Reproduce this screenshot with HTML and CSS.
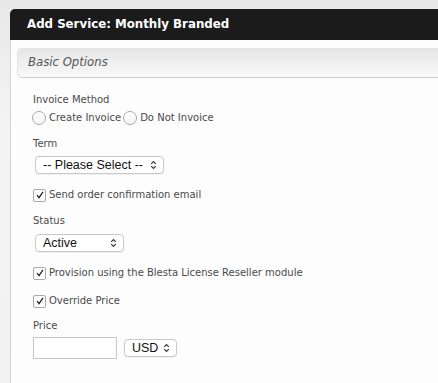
FILE: index.html
```html
<!DOCTYPE html>
<html lang="en">
  <head>
    <meta charset="UTF-8" />
    <meta name="viewport" content="width=device-width, initial-scale=1.0" />
    <title>Add Service</title>
    <link rel="stylesheet" href="styles.css">
  </head>
  <body>
    <div class="panel">
      <div class="panel-head">Add Service: Monthly Branded</div>
      <div class="panel-body">
        <div class="section-bar">Basic Options</div>

        <div class="form">
          <div class="label lbl-first">Invoice Method</div>
          <div class="radio-row">
            <span class="radio"></span><span class="opt">Create Invoice</span>
            <span class="radio"></span><span class="opt">Do Not Invoice</span>
          </div>

          <div class="label lbl-term">Term</div>
          <div class="select sel-term">
            <span>-- Please Select --</span>
            <svg class="chev" width="7" height="10" viewBox="0 0 7 10"><path d="M1.2 3.8 L3.5 1.5 L5.8 3.8 M1.2 6.2 L3.5 8.5 L5.8 6.2" fill="none" stroke="#333" stroke-width="1.2"/></svg>
          </div>

          <div class="check-row row-email">
            <span class="check"><svg width="10" height="10" viewBox="0 0 10 10"><path d="M2 5.2 L4 7.6 L8 1.8" fill="none" stroke="#222" stroke-width="1.3"/></svg></span>
            <span class="opt">Send order confirmation email</span>
          </div>

          <div class="label lbl-status">Status</div>
          <div class="select sel-status">
            <span>Active</span>
            <svg class="chev" width="7" height="10" viewBox="0 0 7 10"><path d="M1.2 3.8 L3.5 1.5 L5.8 3.8 M1.2 6.2 L3.5 8.5 L5.8 6.2" fill="none" stroke="#333" stroke-width="1.2"/></svg>
          </div>

          <div class="check-row row-provision">
            <span class="check"><svg width="10" height="10" viewBox="0 0 10 10"><path d="M2 5.2 L4 7.6 L8 1.8" fill="none" stroke="#222" stroke-width="1.3"/></svg></span>
            <span class="opt">Provision using the Blesta License Reseller module</span>
          </div>

          <div class="check-row row-override">
            <span class="check"><svg width="10" height="10" viewBox="0 0 10 10"><path d="M2 5.2 L4 7.6 L8 1.8" fill="none" stroke="#222" stroke-width="1.3"/></svg></span>
            <span class="opt">Override Price</span>
          </div>

          <div class="label lbl-price">Price</div>
          <div class="price-row">
            <input type="text" class="price-input" />
            <div class="select sel-currency">
              <span>USD</span>
              <svg class="chev" width="7" height="10" viewBox="0 0 7 10"><path d="M1.2 3.8 L3.5 1.5 L5.8 3.8 M1.2 6.2 L3.5 8.5 L5.8 6.2" fill="none" stroke="#333" stroke-width="1.2"/></svg>
            </div>
          </div>
        </div>
      </div>
    </div>
  </body>
</html>
```

FILE: styles.css
```css
html,
body {
  height: 100%;
}
body {
  margin: 0;
  padding: 9px 0 0 10px;
  box-sizing: border-box;
  overflow: hidden;
  font-family: "DejaVu Sans", Verdana, sans-serif;
  background: linear-gradient(#e8e8e8, #f3f3f3 120px, #f2f2f2);
}
.panel {
  height: 100%;
  display: flex;
  flex-direction: column;
}
.panel-head {
  background: #1b1b1b;
  color: #fff;
  font-weight: bold;
  font-size: 11.8px;
  height: 31px;
  line-height: 31px;
  padding-left: 17px;
  border-radius: 5px 0 0 0;
}
.panel-body {
  flex: 1;
  background: #fdfdfd;
  border-left: 1px solid #d4d4d4;
  padding-top: 8px;
}
.section-bar {
  margin-left: 7px;
  height: 29px;
  line-height: 29px;
  padding-left: 10px;
  font-style: italic;
  font-size: 11.7px;
  color: #555;
  background: linear-gradient(#e5e5e5, #f9f9f9);
  border-bottom: 1px solid #cfcfcf;
  border-radius: 5px 0 0 5px;
  box-shadow: -1px 0 0 #e2e2e2;
}
.form {
  padding-left: 22px;
  font-size: 10px;
  color: #4a4a4a;
}
.label {
  line-height: 14px;
  height: 14px;
}
.lbl-first {
  margin-top: 15px;
}
.radio-row {
  display: flex;
  align-items: center;
  height: 14px;
  margin-top: 4px;
  margin-left: -1px;
}
.radio {
  width: 12px;
  height: 12px;
  border: 1px solid #a9a9a9;
  border-radius: 50%;
  background: linear-gradient(#fff, #f4f4f4);
  margin-right: 3px;
}
.opt {
  line-height: 14px;
  margin-right: 2px;
}
.lbl-term {
  margin-top: 12px;
}
.select {
  display: flex;
  align-items: center;
  justify-content: space-between;
  box-sizing: border-box;
  height: 18px;
  margin-left: 2px;
  padding: 0 6px 0 7px;
  border: 1px solid #c9c9c9;
  border-radius: 4px;
  background: #fff;
  box-shadow: 0 1px 0 rgba(0, 0, 0, 0.05);
  font-family: "Liberation Sans", Arial, sans-serif;
  font-size: 12.5px;
  color: #111;
}
.sel-term {
  width: 129px;
  margin-top: 5px;
}
.sel-status {
  width: 89px;
  margin-top: 6px;
}
.sel-currency {
  width: 53px;
  margin-left: 7px;
}
.check-row {
  display: flex;
  align-items: center;
  height: 14px;
}
.check {
  width: 11px;
  height: 11px;
  border: 1px solid #a9a9a9;
  border-radius: 2px;
  background: #fff;
  margin-right: 3px;
  display: flex;
  align-items: center;
  justify-content: center;
}
.row-email {
  margin-top: 14px;
}
.lbl-status {
  margin-top: 12px;
}
.row-provision {
  margin-top: 14px;
}
.row-override {
  margin-top: 14px;
}
.lbl-price {
  margin-top: 11px;
}
.price-row {
  display: flex;
  align-items: center;
  margin-top: 4px;
}
.price-input {
  width: 84px;
  height: 22px;
  box-sizing: border-box;
  margin: 0;
  border: 1px solid #c6c6c6;
  background: #fff;
}
```
